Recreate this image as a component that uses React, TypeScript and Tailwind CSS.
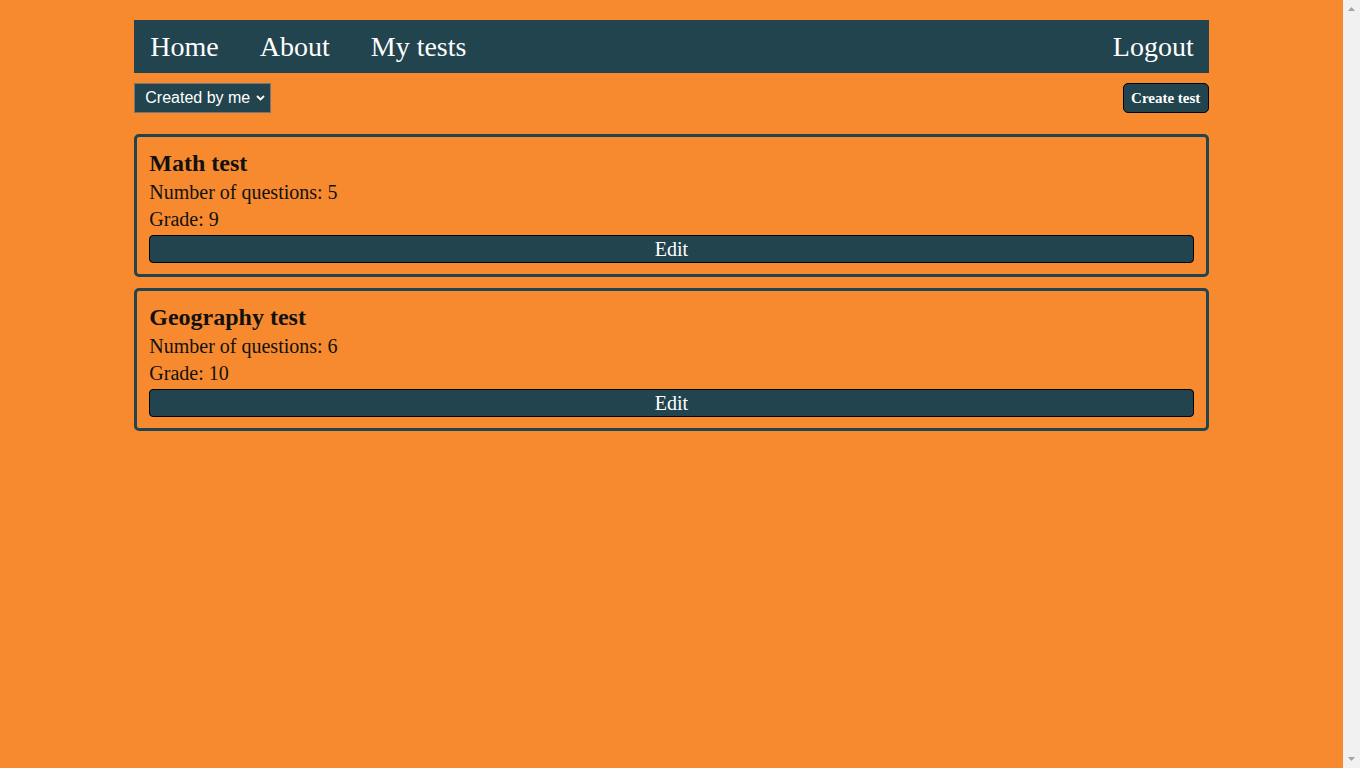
import React from "react";

const tests = [
  { name: "Math test", questions: 5, grade: 9 },
  { name: "Geography test", questions: 6, grade: 10 },
];

function TestCard({ name, questions, grade }: { name: string; questions: number; grade: number }) {
  return (
    <div className="rounded-[5px] border-[3px] border-[#21444e] px-3 pt-[10px] pb-[11px] text-[#111]">
      <h2 className="text-[24px] font-bold leading-[32px]">{name}</h2>
      <p className="text-[20px] leading-[27px]">Number of questions: {questions}</p>
      <p className="text-[20px] leading-[27px]">Grade: {grade}</p>
      <button className="mt-[2px] flex h-[28px] w-full items-center justify-center rounded-[4px] border border-black bg-[#21444e] text-[20px] leading-none text-white">
        Edit
      </button>
    </div>
  );
}

// fake classic scrollbar, the reference was taken with one
function Scrollbar() {
  return (
    <div className="flex w-[17px] shrink-0 flex-col items-center justify-between bg-[#f1f1f1] py-[7px]">
      <svg width="7" height="4" viewBox="0 0 7 4">
        <path d="M0 4L3.5 0L7 4z" fill="#a3a3a3" />
      </svg>
      <svg width="7" height="4" viewBox="0 0 7 4">
        <path d="M0 0L3.5 4L7 0z" fill="#a3a3a3" />
      </svg>
    </div>
  );
}

export default function App() {
  return (
    <div className="flex h-screen" style={{ fontFamily: '"Liberation Serif", serif' }}>
      <div className="flex-1 bg-[#f78a2f] pt-5">
        <div className="mx-auto w-[80%]">
          <nav className="flex h-[53px] items-center justify-between bg-[#21444e] pl-4 pr-[15px] text-[28px] text-white">
            <div className="flex items-center gap-[41px]">
              <a href="#">Home</a>
              <a href="#">About</a>
              <a href="#">My tests</a>
            </div>
            <a href="#">Logout</a>
          </nav>

          <div className="mt-[10px] flex items-center justify-between">
            <div className="relative">
              <select
                className="h-[30px] w-[137px] appearance-none border border-[#767676] bg-[#21444e] pl-[10px] text-[16px] text-white outline-none"
                style={{ fontFamily: '"Liberation Sans", Arial, sans-serif' }}
                defaultValue="me"
              >
                <option value="me">Created by me</option>
                <option value="all">All tests</option>
              </select>
              <svg
                className="pointer-events-none absolute right-[6px] top-[12px]"
                width="9"
                height="6"
                viewBox="0 0 9 6"
              >
                <path d="M1 1l3.5 3.5L8 1" fill="none" stroke="white" strokeWidth="1.8" />
              </svg>
            </div>
            <button className="h-[30px] w-[86px] rounded-[5px] border border-black bg-[#21444e] text-[15px] font-bold text-white">
              Create test
            </button>
          </div>

          <div className="mt-[21px] flex flex-col gap-[11px]">
            {tests.map((t) => (
              <TestCard key={t.name} {...t} />
            ))}
          </div>
        </div>
      </div>
      <Scrollbar />
    </div>
  );
}
